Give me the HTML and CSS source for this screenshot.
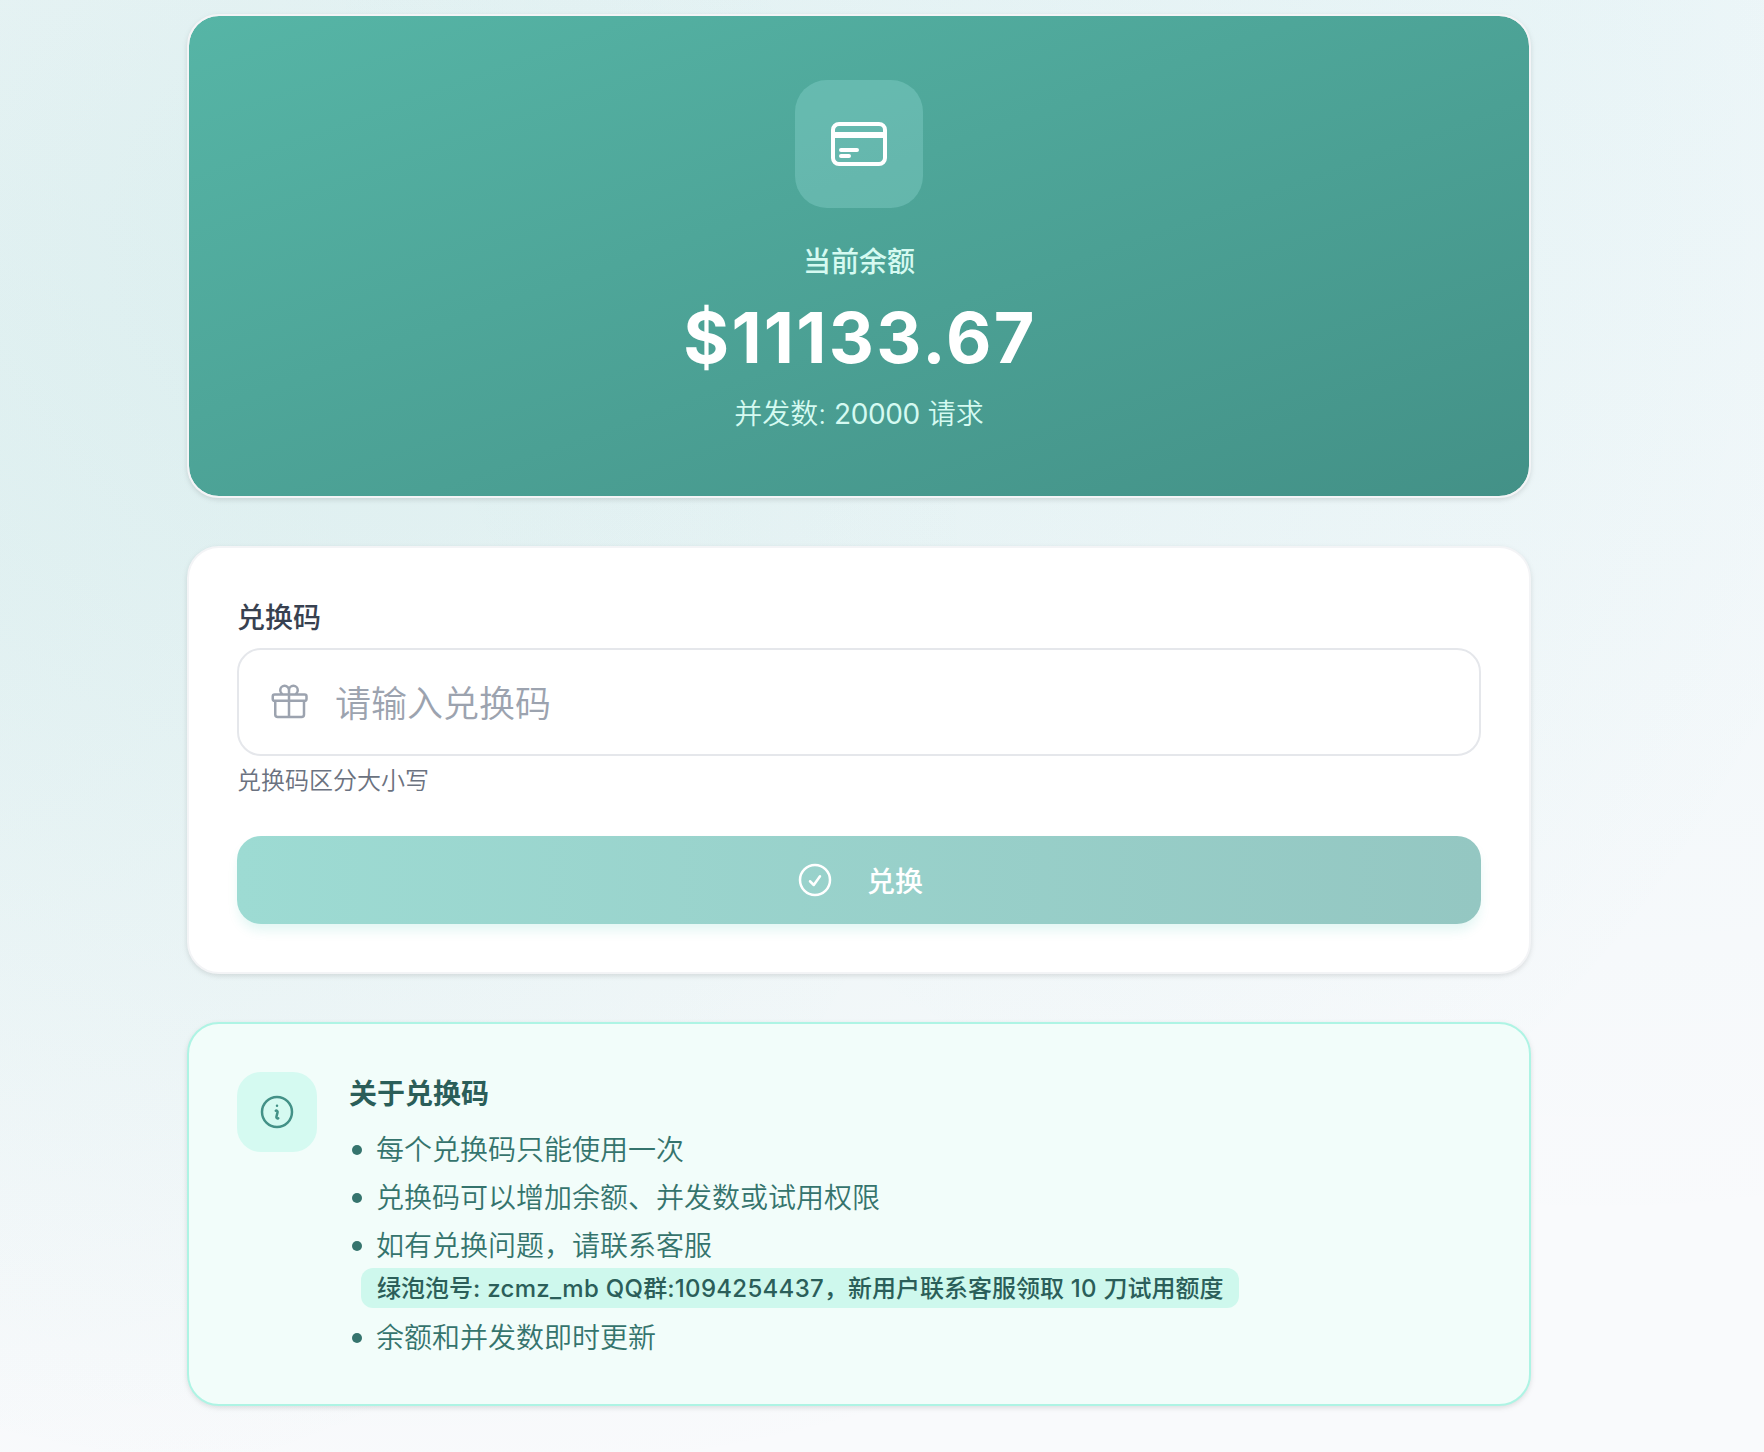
FILE: index.html
```html
<!DOCTYPE html>
<html lang="zh-CN">
<head>
    <meta charset="UTF-8">
    <meta name="viewport" content="width=device-width, initial-scale=1.0">
    <title>兑换</title>
    <link rel="stylesheet" href="styles.css">
</head>
<body>
    <main class="container">
        <section class="card balance">
            <div class="balance-icon">
                <svg viewBox="0 0 24 24"><path d="M2.25 8.25h19.5M2.25 9h19.5m-16.5 5.25h6m-6 2.25h3m-3.75 3h15a2.25 2.25 0 002.25-2.25V6.75A2.25 2.25 0 0019.5 4.5h-15a2.25 2.25 0 00-2.25 2.25v10.5A2.25 2.25 0 004.5 19.5z"/></svg>
            </div>
            <p class="balance-label">当前余额</p>
            <p class="balance-amount">$11133.67</p>
            <p class="balance-note">并发数: <span class="num">20000</span> 请求</p>
        </section>

        <form class="card redeem" onsubmit="return false">
            <label class="field-label" for="code">兑换码</label>
            <div class="field">
                <svg viewBox="0 0 24 24"><path d="M21 11.25v8.25a1.5 1.5 0 01-1.5 1.5H5.25a1.5 1.5 0 01-1.5-1.5v-8.25M12 4.875A2.625 2.625 0 109.375 7.5H12m0-2.625V7.5m0-2.625A2.625 2.625 0 1114.625 7.5H12m0 0V21m-8.625-9.75h18c.621 0 1.125-.504 1.125-1.125v-1.5c0-.621-.504-1.125-1.125-1.125h-18c-.621 0-1.125.504-1.125 1.125v1.5c0 .621.504 1.125 1.125 1.125z"/></svg>
                <input type="text" id="code" placeholder="请输入兑换码">
            </div>
            <p class="hint">兑换码区分大小写</p>
            <button type="submit" class="btn" disabled>
                <svg viewBox="0 0 24 24"><path d="M9 12.75L11.25 15 15 9.75M21 12a9 9 0 11-18 0 9 9 0 0118 0z"/></svg>
                <span>兑换</span>
            </button>
        </form>

        <section class="card about">
            <div class="about-icon">
                <svg viewBox="0 0 24 24"><path d="M11.25 11.25l.041-.02a.75.75 0 011.063.852l-.708 2.836a.75.75 0 001.063.853l.041-.021M21 12a9 9 0 11-18 0 9 9 0 0118 0zm-9-3.75h.008v.008H12V8.25z"/></svg>
            </div>
            <div class="about-body">
                <h3>关于兑换码</h3>
                <ul>
                    <li>每个兑换码只能使用一次</li>
                    <li>兑换码可以增加余额、并发数或试用权限</li>
                    <li>如有兑换问题，请联系客服
                        <span class="contact">绿泡泡号<b>: zcmz_mb QQ</b>群<b>:1094254437</b>，新用户联系客服领取<b> 10 </b>刀试用额度</span>
                    </li>
                    <li>余额和并发数即时更新</li>
                </ul>
            </div>
        </section>
    </main>
</body>
</html>
```

FILE: styles.css
```css
* {
    box-sizing: border-box;
}

body {
    margin: 0;
    min-height: 1452px;
    font-family: Inter, "Noto Sans CJK SC", sans-serif;
    font-size: 28px;
    font-weight: 350;
    line-height: 40px;
    background-color: #f9fafc;
    background-image:
        radial-gradient(1500px 1250px at 400px 250px, rgba(20, 160, 150, 0.1) 0, transparent 100%),
        radial-gradient(1300px 1300px at 1600px -50px, rgba(20, 175, 185, 0.06) 0, transparent 100%),
        radial-gradient(1100px 1000px at -100px 550px, rgba(20, 160, 150, 0.05) 0, transparent 100%);
}

p, h3, ul {
    margin: 0;
    padding: 0;
}

svg {
    display: block;
    width: 40px;
    height: 40px;
    flex-shrink: 0;
    fill: none;
    stroke: currentColor;
    stroke-width: 1.5;
    stroke-linecap: round;
    stroke-linejoin: round;
}

.container {
    display: flex;
    flex-direction: column;
    gap: 48px;
    width: 1344px;
    margin-left: 187px;
    padding-top: 14px;
}

.card {
    border: 2px solid #f3f4f6;
    border-radius: 32px;
    background-color: #fff;
    box-shadow: 0 2px 6px rgba(0, 0, 0, 0.08), 0 2px 4px rgba(0, 0, 0, 0.04);
}

/* balance */
.balance {
    display: flex;
    flex-direction: column;
    align-items: center;
    padding: 64px 64px 62px;
    background: linear-gradient(to bottom right, #56b5a6, #439187) padding-box, #f3f4f6 border-box;
    color: #d5faf1;
}

.balance-icon {
    display: flex;
    align-items: center;
    justify-content: center;
    width: 128px;
    height: 128px;
    margin-bottom: 34px;
    border-radius: 32px;
    background-color: rgba(160, 230, 225, 0.28);
    color: #fff;
}

.balance-icon svg {
    width: 64px;
    height: 64px;
}

.balance-label {
    font-weight: 500;
}

.balance-amount {
    margin: 16px 0;
    padding-left: 2px;
    font-size: 70px;
    font-weight: 700;
    line-height: 80px;
    letter-spacing: 2.3px;
    color: #fff;
}

.num {
    font-weight: 400;
    letter-spacing: -0.35px;
}

/* redeem form */
.redeem {
    padding: 50px 48px 48px;
}

.field-label {
    display: block;
    margin-bottom: 10px;
    font-weight: 500;
    color: #384150;
}

.field {
    display: flex;
    align-items: center;
    gap: 26px;
    height: 108px;
    padding: 0 30px;
    border: 2px solid #e5e7eb;
    border-radius: 24px;
    color: #9ca3af;
}

.field input {
    flex: 1;
    padding: 3px 0 0;
    border: none;
    outline: none;
    background: none;
    font: inherit;
    font-size: 36px;
    line-height: 56px;
}

.field input::placeholder {
    color: #9ca3af;
    opacity: 1;
}

.hint {
    margin-top: 9px;
    font-size: 24px;
    line-height: 32px;
    color: #6b7280;
}

.btn {
    display: flex;
    align-items: center;
    justify-content: center;
    gap: 32px;
    width: 100%;
    height: 88px;
    margin-top: 39px;
    padding: 0;
    border: none;
    border-radius: 24px;
    background: linear-gradient(to right, #9ddbd3, #94c7c2);
    box-shadow: 0 8px 12px -2px rgba(20, 184, 166, 0.13);
    color: #fff;
    font: inherit;
    font-weight: 500;
}

.btn span {
    padding-top: 3px;
}

/* about */
.about {
    display: flex;
    gap: 32px;
    padding: 48px 48px 46px;
    border-color: #aef4e4;
    background-color: #f2fdfa;
}

.about-icon {
    display: flex;
    align-items: center;
    justify-content: center;
    flex-shrink: 0;
    width: 80px;
    height: 80px;
    border-radius: 24px;
    background-color: #d5faf1;
    color: #439187;
}

.about-body {
    padding-top: 2px;
    color: #35746d;
}

.about h3 {
    margin-bottom: 16px;
    font-size: 28px;
    font-weight: 600;
    color: #2b5e59;
}

.about ul {
    display: flex;
    flex-direction: column;
    gap: 8px;
    list-style: none;
}

.about li::before {
    content: "";
    display: inline-block;
    width: 10px;
    height: 10px;
    margin: 0 14px 5px 3px;
    border-radius: 50%;
    background-color: currentColor;
}

.contact {
    display: block;
    width: fit-content;
    margin: 2px 0 2px 12px;
    padding: 5px 16px 3px;
    border-radius: 12px;
    background-color: #cef8ed;
    color: #2b5e59;
    font-size: 24px;
    font-weight: 500;
    line-height: 32px;
}

.contact b {
    font-weight: 500;
    letter-spacing: 0.3px;
}
```
